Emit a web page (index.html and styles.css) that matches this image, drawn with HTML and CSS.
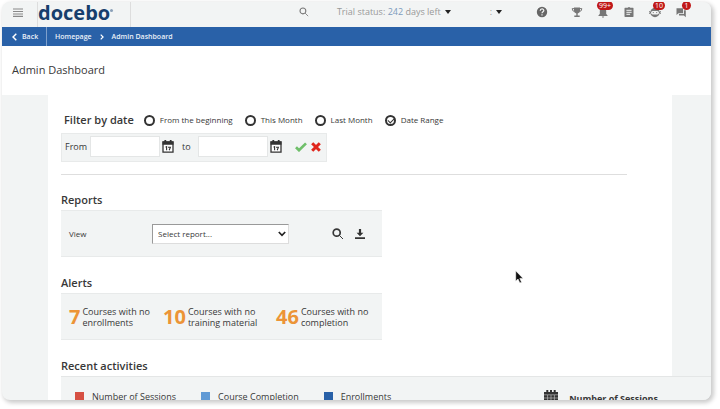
FILE: index.html
```html
<!DOCTYPE html>
<html lang="en">
<head>
<meta charset="utf-8">
<title>Admin Dashboard</title>
<link rel="stylesheet" href="styles.css">
</head>
<body>
<svg class="defs" aria-hidden="true">
  <symbol id="calendar" viewBox="0 0 12 13">
    <path d="M1 2h10v10.2H1z" fill="#fff" stroke="#333" stroke-width="1.3"/>
    <path d="M.5 1.6h11v3.2H.5zM2.4 0h1.8v3H2.4zM7.8 0h1.8v3H7.8z" fill="#333"/>
    <path d="M3.6 7.3l1-.6v3.600M6 7.200h2.400L7.2 10.300" fill="none" stroke="#333" stroke-width="1.1"/>
  </symbol>
  <symbol id="glass" viewBox="0 0 12 12">
    <circle cx="4.700" cy="4.700" r="3.500" fill="none" stroke="currentColor" stroke-width="var(--line)"/>
    <path d="M7.300 7.300l3.700 3.700" stroke="currentColor" stroke-width="calc(var(--line) + .3)"/>
  </symbol>
</svg>
<div class="window">
  <header class="topbar">
    <button class="menu" aria-label="Menu"><svg width="10" height="9" viewBox="0 0 10 9"><path d="M0 1h10M0 3.500h10M0 6h10M0 8.400h10" stroke="#888" stroke-width="1.100"/></svg></button>
    <a class="logo" href="#">docebo<span class="reg"></span></a>
    <div class="tools">
      <button class="search" aria-label="Search"><svg width="10" height="10"><use href="#glass"/></svg></button>
      <button class="trial"><span>Trial status: <b>242</b> days left</span><i class="caret"></i></button>
      <button class="user" aria-label="User menu">: <i class="caret"></i></button>
      <nav class="icons" aria-label="Shortcuts">
        <a href="#" aria-label="Help" class="help"><svg width="12" height="12" viewBox="0 0 12 12"><circle cx="6" cy="6" r="5.200" fill="#666"/><path d="M4.200 4.800C4.200 2.300 7.900 2.400 7.800 4.600C7.700 5.700 6 5.900 6 7.300M6 8.200v1.200" fill="none" stroke="#f2f4f4" stroke-width="1.200"/></svg></a>
        <a href="#" aria-label="Achievements"><svg width="12" height="12" viewBox="0 0 12 12"><path d="M3 1.500h6v3.500q0 2-2.300 2.400v2.200h2v1.300H3.300V9.600h2V7.400Q3 7 3 5z" fill="#777"/><path d="M3 2.600H1.200Q1.200 5.300 3.500 5.500M9 2.600h1.800Q10.800 5.300 8.500 5.500" fill="none" stroke="#777" stroke-width="1"/></svg></a>
        <a href="#" aria-label="Notifications"><svg width="12" height="12" viewBox="0 0 12 12"><path d="M6 1Q9.200 1.500 9.200 5v3l1.300 1.200v.800h-9v-.800L2.800 8V5Q2.800 1.500 6 1zM4.800 10.400h2.400Q7 11.600 6 11.600T4.800 10.400z" fill="#777"/></svg><span class="badge">99+</span></a>
        <a href="#" aria-label="Tasks"><svg width="12" height="12" viewBox="0 0 12 12"><path d="M2 1.800h2.700Q6 0 7.300 1.800H10q.500 0 .500.500v8q0 .700-.500.700H2q-.500 0-.500-.700v-8q0-.500.500-.500z" fill="#777"/><path d="M3.400 4.300h5.200M3.400 6.300h5.200M3.400 8.300h3.700" stroke="#f2f4f4" stroke-width="1"/></svg></a>
        <a href="#" aria-label="Coach"><svg width="12" height="12" viewBox="0 0 12 12"><circle cx="6" cy="6.500" r="4.700" fill="#777"/><rect x="2" y="5" width="8" height="3.400" rx="1.700" fill="#f2f4f4"/><path d="M3.800 6.600h1M7.200 6.600h1M0 5.500l2 1-2 1M12 5.500l-2 1 2 1" stroke="#777" fill="none"/></svg><span class="badge">10</span></a>
        <a href="#" aria-label="Messages"><svg width="12" height="12" viewBox="0 0 12 12"><path d="M1.500 2.200H8v5H3.500L1.500 9z" fill="#777"/><path d="M8.900 4.200H10.800V11.200L8.900 9.400H4V8.100h4.900z" fill="#777"/></svg><span class="badge">1</span></a>
      </nav>
    </div>
  </header>
  <nav class="crumbs" aria-label="Breadcrumb">
    <a class="back" href="#"><svg width="5" height="8" viewBox="0 0 5 8"><path d="M4.300.8L1 4l3.300 3.200" fill="none" stroke="#fff" stroke-width="1.500"/></svg>Back</a>
    <a href="#">Homepage</a>
    <svg width="4" height="6" viewBox="0 0 4 6"><path d="M.7.6L3.100 3 .7 5.400" fill="none" stroke="#fff" stroke-width="1.200"/></svg>
    <a href="#">Admin Dashboard</a>
  </nav>
  <h1>Admin Dashboard</h1>
  <main>
    <form class="filter">
      <div class="choices" role="radiogroup" aria-labelledby="filter-title">
        <h2 id="filter-title">Filter by date</h2>
        <label><input type="radio" name="d">From the beginning</label>
        <label><input type="radio" name="d">This Month</label>
        <label><input type="radio" name="d">Last Month</label>
        <label><input type="radio" name="d" checked>Date Range</label>
      </div>
      <div class="range">
        <label for="from">From</label>
        <input id="from" type="text">
        <button type="button" aria-label="Pick start date"><svg width="12" height="13"><use href="#calendar"/></svg></button>
        <label class="to" for="to">to</label>
        <input id="to" type="text">
        <button type="button" aria-label="Pick end date"><svg width="12" height="13"><use href="#calendar"/></svg></button>
        <button class="apply" type="button" aria-label="Apply"><svg width="12" height="10" viewBox="0 0 12 10"><path d="M1 5.200l3 3L11 1.400" fill="none" stroke="#6fbf6a" stroke-width="2.700"/></svg></button>
        <button type="button" aria-label="Clear"><svg width="10" height="10" viewBox="0 0 10 10"><path d="M1.200 1.200l7.600 7.600M8.800 1.200L1.200 8.800" stroke="#e0261c" stroke-width="3"/></svg></button>
      </div>
    </form>
    <hr>
    <section>
      <h2>Reports</h2>
      <div class="box report">
        <label for="report">View</label>
        <span class="pick"><select id="report"><option>Select report...</option></select><svg width="8" height="6" viewBox="0 0 8 6"><path d="M.8 1L4 4.300 7.200 1" fill="none" stroke="#222" stroke-width="1.700"/></svg></span>
        <button class="view" aria-label="View report"><svg width="12" height="12"><use href="#glass"/></svg></button>
        <button aria-label="Download report"><svg width="12" height="12" viewBox="0 0 12 12"><path d="M4.900 1h2.200v3.700h2.300L6 8.300 2.600 4.700h2.300z" fill="#333"/><path d="M1 10.200h10" stroke="#333" stroke-width="1.800"/></svg></button>
      </div>
    </section>
    <section>
      <h2>Alerts</h2>
      <div class="box alerts">
        <p><strong>7</strong><span>Courses with no<br>enrollments</span></p>
        <p><strong>10</strong><span>Courses with no<br>training material</span></p>
        <p><strong>46</strong><span>Courses with no<br>completion</span></p>
      </div>
    </section>
    <section>
      <h2>Recent activities</h2>
      <div class="recent">
        <ul>
          <li class="sessions">Number of Sessions</li>
          <li class="completion">Course Completion</li>
          <li class="enrollments">Enrollments</li>
        </ul>
        <div class="stat">
          <svg width="14" height="14" viewBox="0 0 14 14"><path d="M0 2h14v12H0zM2.300 0h2v3h-2zM6 0h2v3H6zM9.700 0h2v3h-2z" fill="#333"/><path d="M0 4.800h14M0 8h14M0 11h14M3.600 5v9M7 5v9M10.400 5v9" stroke="#ccc" stroke-width=".6"/></svg>
          <strong>Number of Sessions</strong>
        </div>
      </div>
    </section>
  </main>
</div>
<svg class="pointer" width="9" height="14" viewBox="0 0 9 14" aria-hidden="true"><path d="M.7.8v10.400l2.300-2.200 1.800 4 1.800-.8-1.800-3.800h3.300z" fill="#111" stroke="#fff" stroke-width=".6"/></svg>
</body>
</html>
```
FILE: styles.css
```css
* { box-sizing: border-box; }
body {
  margin: 0;
  padding: 2px 9px 9px 2px;
  height: 100vh;
  overflow: hidden;
  background: #fff;
  color: #383838;
  font: 9px/14px "Open Sans", sans-serif;
}
h1, h2, p, ul { margin: 0; padding: 0; }
a { color: inherit; text-decoration: none; }
svg { display: block; flex: none; }
button {
  display: flex;
  align-items: center;
  padding: 0;
  border: 0;
  background: none;
  color: inherit;
  font: inherit;
}
.defs { position: absolute; width: 0; height: 0; }

.window {
  display: flex;
  flex-direction: column;
  height: 100%;
  overflow: hidden;
  border-radius: 8px;
  background: #f2f4f4;
  box-shadow: 2px 2px 4px 1px #ccc;
}

.topbar { display: flex; flex: none; height: 25px; background: #f2f4f4; }
.menu { flex: none; width: 36px; padding: 0 0 4px 11px; border-right: 1px solid #ddd; }
.logo {
  display: flex;
  flex: none;
  width: 93px;
  border-right: 1px solid #ddd;
  color: #173f6d;
  font-size: 20px;
  font-weight: 700;
  line-height: 22px;
}
.reg { width: 3px; height: 3px; margin-top: 7px; border-radius: 50%; background: #8ba0b8; }
.tools { display: flex; flex: 1; align-items: center; justify-content: flex-end; padding: 0 24px 5px 0; color: #999; }
.search { margin-right: 28px; color: #777; --line: 1.3px; }
.trial b { color: #7d9cbd; font-weight: 400; }
.caret { margin-left: 4px; border: 3px solid transparent; border-top: 4px solid #222; border-bottom: 0; }
.user { margin: 0 34px 0 39px; }
.icons { display: flex; gap: 14px; }
.icons a { position: relative; }
.icons .help { margin-right: 9px; }
.badge {
  position: absolute;
  top: -5px;
  right: -4px;
  min-width: 9px;
  padding: 0 2px;
  border-radius: 5px;
  background: #c01818;
  color: #fff;
  font-size: 7px;
  line-height: 9px;
  text-align: center;
}

.crumbs {
  display: flex;
  flex: none;
  align-items: center;
  gap: 8px;
  height: 19px;
  background: #2961a8;
  color: #e9f0f8;
  font-size: 7px;
  font-weight: 600;
}
.back { display: flex; align-items: center; gap: 5px; width: 45px; height: 19px; padding-left: 10px; border-right: 1px solid #7fa0cc; }
h1 { flex: none; height: 49px; padding-left: 10px; background: #fff; font-size: 11px; font-weight: 400; line-height: 48px; }

main { flex: 1; min-height: 0; margin: 0 39px 0 46px; padding: 14px 0 0 13px; background: #fff; }
h2 { height: 20px; font-size: 11px; font-weight: 600; line-height: 20px; }
.choices { display: flex; align-items: center; height: 24px; padding: 0 0 2px 3px; font-size: 8px; }
.choices h2 { margin-right: 10px; }
.choices label { display: flex; align-items: center; gap: 5px; margin-right: 12px; }
.choices input { appearance: none; width: 11px; height: 11px; margin: 0; border: 2px solid #333; border-radius: 50%; background: #fff; }
.choices input:checked::after { content: ""; display: block; width: 5px; height: 3px; margin: 1px; border: solid #333; border-width: 0 0 1px 1px; transform: rotate(-45deg); }
.range { display: flex; align-items: center; width: 266px; height: 29px; padding: 0 0 2px 3px; border: 1px solid #e8eaea; background: #f2f4f4; }
.range input { width: 70px; height: 21px; margin: 0 2px 0 3px; border: 1px solid #e4e6e6; background: #fff; font: inherit; }
.range .to { margin: 0 4px 0 8px; }
.range .apply { margin: 0 4px 0 13px; }
hr { width: 566px; max-width: 100%; height: 1px; margin: 12px 0 15px; border: 0; background: #dedede; }
section { margin-bottom: 16px; }
.box { display: flex; align-items: center; width: 321px; height: 47px; border-top: 1px solid #e8eaea; border-bottom: 1px solid #e8eaea; background: #f2f4f4; }
.report { padding-left: 8px; font-size: 8px; }
.report label { width: 83px; }
.pick { position: relative; }
.pick select { appearance: none; display: block; width: 137px; height: 20px; padding: 0 5px; border: 1px solid #ddd; border-top-color: #999; border-left-color: #999; border-radius: 0; background: #fff; color: inherit; font: inherit; }
.pick svg { position: absolute; top: 7px; right: 3px; }
.view { margin: 0 10px 0 43px; --line: 1.700px; }
.alerts { display: grid; grid-template-columns: 94px 113px auto; padding-left: 8px; }
.alerts p { display: flex; align-items: center; gap: 2px; line-height: 11px; white-space: nowrap; }
.alerts strong { color: #ec9437; font-size: 20px; line-height: 24px; }
.recent { display: flex; justify-content: space-between; height: 60px; margin-right: -39px; padding: 13px 53px 0 14px; border-top: 1px solid #e4e6e6; background: #f2f4f4; }
.recent ul { display: flex; gap: 25px; list-style: none; }
.recent li { display: flex; gap: 8px; height: 14px; }
.recent li::before { content: ""; width: 9px; height: 9px; margin-top: 2px; }
.sessions::before { background: #d65043; }
.completion::before { background: #609ad5; }
.enrollments::before { background: #2961a8; }
.stat { display: flex; gap: 11px; line-height: 18px; }
.pointer { position: absolute; left: 515px; top: 270px; }
```
